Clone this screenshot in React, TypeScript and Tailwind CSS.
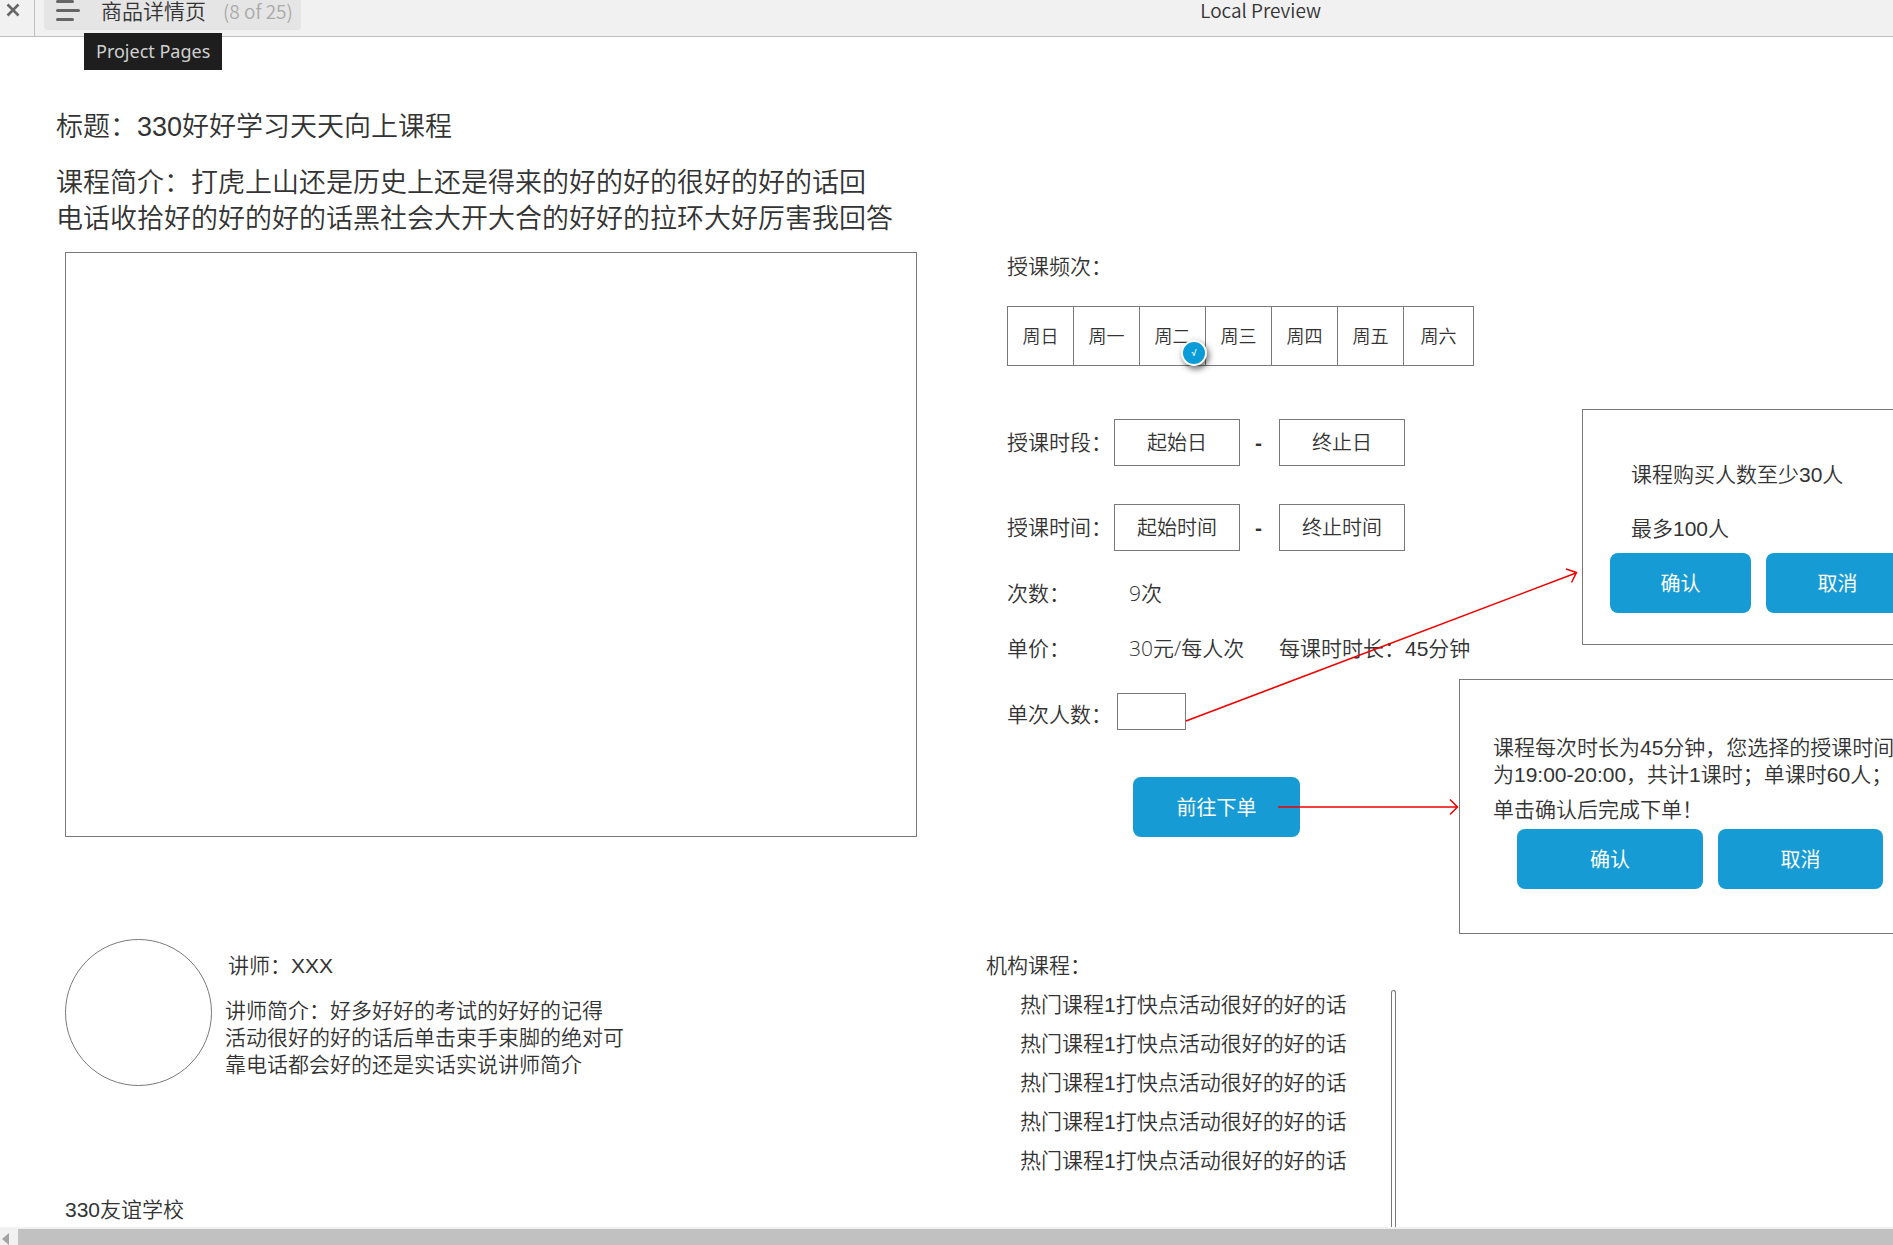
import { useState } from "react";

const WEEKDAYS = ["周日", "周一", "周二", "周三", "周四", "周五", "周六"];

const HOT_COURSES = [1, 2, 3, 4, 5].map((id) => ({
  id,
  label: "热门课程1打快点活动很好的好的话",
}));

const uiFont = "font-['Open_Sans','Noto_Sans_CJK_SC',sans-serif]";

const buttonClass =
  "h-[60px] shrink-0 rounded-lg bg-[#169bd5] pt-[2px] text-[20px] font-normal text-white";

function TopBar() {
  return (
    <header className="relative flex h-[37px] shrink-0 border-b border-[#bfbfbf] bg-[#f1f1f1] font-['Noto_Sans_CJK_SC',sans-serif]">
      <button
        type="button"
        aria-label="Close"
        className="flex w-[35px] justify-center border-r border-[#bfbfbf] pr-[8px] pt-[3px]"
      >
        <svg width="14" height="14" viewBox="0 0 14 14" stroke="#666" strokeWidth="2.6">
          <path d="M1.5 1.5l11 11M12.5 1.5l-11 11" />
        </svg>
      </button>

      <button
        type="button"
        className="ml-[9px] flex h-[30px] items-start rounded-b bg-[#e5e5e5] pl-3 pr-2"
      >
        <svg
          width="24"
          height="22"
          viewBox="0 0 24 22"
          stroke="#666"
          strokeWidth="3"
          strokeLinecap="round"
        >
          <path d="M1.5 1.5h15M1.5 10.5h21M1.5 19.5h15" />
        </svg>
        <span className="ml-[21px] text-[21px] leading-[20px] text-[#333]">商品详情页</span>
        <span className="ml-[17px] text-[19px] leading-[22px] text-[#aaa]">(8 of 25)</span>
      </button>

      {/* Tooltip */}
      <div
        role="tooltip"
        className="absolute left-[84px] top-[33px] z-10 bg-[#1e1e1e] px-3 font-['Noto_Sans',sans-serif] text-[18px] font-normal leading-[37px] text-[#d0d0d0]"
      >
        Project Pages
      </div>

      <span className="ml-auto mr-[572px] text-[19px] leading-[20px] text-[#333]">
        Local Preview
      </span>
    </header>
  );
}

function RangeRow({
  id,
  label,
  start,
  end,
}: {
  id: string;
  label: string;
  start: string;
  end: string;
}) {
  const inputClass =
    "h-[47px] w-[126px] border border-[#797979] bg-white pt-[2px] text-center text-[20px] placeholder:text-[#333] focus:outline-none";

  return (
    <div className="flex items-center">
      <label htmlFor={id} className="w-[107px]">
        {label}
      </label>
      <input id={id} type="text" placeholder={start} className={inputClass} />
      <span className="w-[39px] pr-[2px] text-center font-bold">-</span>
      <input type="text" aria-label={end} placeholder={end} className={inputClass} />
    </div>
  );
}

function Connectors() {
  return (
    <svg
      className="pointer-events-none absolute left-0 top-0 z-10"
      width="600"
      height="600"
      viewBox="0 0 600 600"
      fill="none"
      stroke="#f00000"
      strokeWidth="1.5"
    >
      <path d="M179 469L569 321M559 317l10.500 3.500-5 10" />
      <path d="M271 555H450M443 547.500l7.500 7.500-7.500 7.500" />
    </svg>
  );
}

function BookingForm() {
  const [selected, setSelected] = useState(2);
  const [people, setPeople] = useState("");

  return (
    <div className="relative whitespace-nowrap pt-px">
      <p>授课频次：</p>

      <div className="mt-[26px] flex h-[60px] w-[467px] border border-[#797979]">
        {WEEKDAYS.map((day, i) => (
          <button
            key={day}
            type="button"
            onClick={() => setSelected(i)}
            className="relative w-[66px] border-r border-[#797979] pt-[2px] text-[18px] last:w-auto last:flex-1 last:border-r-0"
          >
            {day}
            {selected === i && (
              <span className="absolute -bottom-px -right-[2px] z-10 flex size-[26px] items-center justify-center rounded-full border-2 border-white bg-[#0a9bd9] text-[9px] font-bold text-white shadow-[2px_3px_6px_rgba(0,0,0,0.6)]">
                √
              </span>
            )}
          </button>
        ))}
      </div>

      <div className="mt-[53px] space-y-[38px]">
        <RangeRow id="date-start" label="授课时段：" start="起始日" end="终止日" />
        <RangeRow id="time-start" label="授课时间：" start="起始时间" end="终止时间" />
      </div>

      <dl className="mt-[29px] grid grid-cols-[122px_150px_auto] gap-y-7">
        <dt>次数：</dt>
        <dd className={`col-span-2 ${uiFont}`}>9次</dd>
        <dt>单价：</dt>
        <dd className={uiFont}>30元/每人次</dd>
        <dd>每课时时长：45分钟</dd>
      </dl>

      <div className="mt-[31px] flex items-end">
        <label htmlFor="people" className="w-[110px] pb-[2px]">
          单次人数：
        </label>
        <input
          id="people"
          type="text"
          value={people}
          onChange={(e) => setPeople(e.target.value)}
          className="h-[37px] w-[69px] border border-[#797979] text-center focus:outline-none"
        />
      </div>

      <button type="button" className={`ml-[126px] mt-[47px] w-[167px] ${buttonClass}`}>
        前往下单
      </button>

      <Connectors />
    </div>
  );
}

function Dialogs() {
  return (
    <div className="overflow-hidden whitespace-nowrap pt-[157px]">
      <section className="ml-[123px] h-[236px] border border-r-0 border-[#797979] pl-[27px] pt-[51px]">
        <p className="pl-[21px]">课程购买人数至少30人</p>
        <p className="mt-[27px] pl-[21px]">最多100人</p>
        <div className="mt-[11px] flex gap-[15px]">
          <button type="button" className={`w-[141px] ${buttonClass}`}>
            确认
          </button>
          <button type="button" className={`w-[143px] ${buttonClass}`}>
            取消
          </button>
        </div>
      </section>

      <section className="mt-[34px] h-[255px] border border-r-0 border-[#797979] pl-[33px] pt-[54px]">
        <p>
          课程每次时长为45分钟，您选择的授课时间
          <br />
          为19:00-20:00，共计1课时；单课时60人；
        </p>
        <p className="mt-2">单击确认后完成下单！</p>
        <div className="ml-[24px] mt-[6px] flex gap-[15px]">
          <button type="button" className={`w-[186px] ${buttonClass}`}>
            确认
          </button>
          <button type="button" className={`w-[165px] ${buttonClass}`}>
            取消
          </button>
        </div>
      </section>
    </div>
  );
}

export default function App() {
  return (
    <div className="flex min-h-screen flex-col overflow-hidden bg-white font-['Liberation_Sans','Noto_Sans_CJK_SC',sans-serif] text-[21px] font-[350] leading-[27px] text-[#333]">
      <TopBar />

      <main className="flex flex-1 flex-col">
        <div className="px-14 pt-[72px] text-[27px] leading-[36px]">
          <h1>标题：330好好学习天天向上课程</h1>
          <p className="mt-5">
            课程简介：打虎上山还是历史上还是得来的好的好的很好的好的话回
            <br />
            电话收拾好的好的好的话黑社会大开大合的好好的拉环大好厉害我回答
          </p>
        </div>

        <div className="mt-[15px] grid grid-cols-[minmax(0,1fr)_452px_434px]">
          {/* Course cover */}
          <div className="ml-[65px] mr-[90px] h-[585px] border border-[#797979]" />
          <BookingForm />
          <Dialogs />
        </div>

        <div className="mt-[5px] grid flex-1 grid-cols-[minmax(0,1fr)_907px]">
          <div className="flex flex-col justify-between pl-[65px]">
            <div className="flex">
              <div className="size-[147px] shrink-0 rounded-full border border-[#797979]" />
              <div className="ml-[13px] pt-[13px]">
                <p className="pl-[3px]">讲师：XXX</p>
                <p className="mt-[18px]">
                  讲师简介：好多好好的考试的好好的记得
                  <br />
                  活动很好的好的话后单击束手束脚的绝对可
                  <br />
                  靠电话都会好的还是实话实说讲师简介
                </p>
              </div>
            </div>
            <p className="pb-1">330友谊学校</p>
          </div>

          <div className="flex">
            <div className="w-[405px] pt-[13px]">
              <h2>机构课程：</h2>
              <ul className="mt-3 space-y-3 pl-[34px]">
                {HOT_COURSES.map((course) => (
                  <li key={course.id}>{course.label}</li>
                ))}
              </ul>
            </div>
            <div className="mt-[51px] w-[5px] rounded-t-sm border border-b-0 border-[#797979]" />
          </div>
        </div>
      </main>

      {/* Horizontal scrollbar */}
      <div className="flex h-[18px] shrink-0 bg-[#f1f1f1] pt-[2px]">
        <div className="flex w-[18px] items-center pl-[2px] pt-[4px]">
          <svg width="7" height="12" viewBox="0 0 7 12" fill="#a3a3a3">
            <path d="M7 0v12L0 6z" />
          </svg>
        </div>
        <div className="flex-1 bg-[#c1c1c1]" />
      </div>
    </div>
  );
}
